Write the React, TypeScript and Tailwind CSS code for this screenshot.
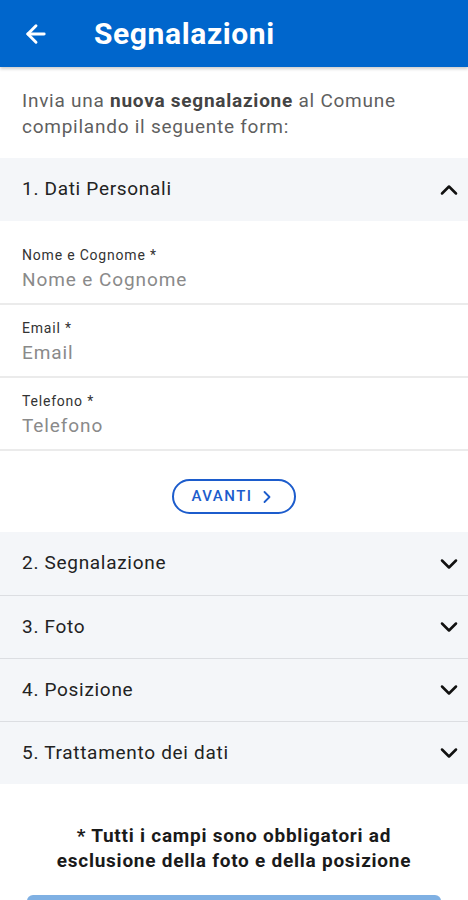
import { ArrowLeft, ChevronDown, ChevronUp, ChevronRight } from "lucide-react"

const fields = [
  { label: "Nome e Cognome *", placeholder: "Nome e Cognome" },
  { label: "Email *", placeholder: "Email" },
  { label: "Telefono *", placeholder: "Telefono" },
]

const sections = ["2. Segnalazione", "3. Foto", "4. Posizione", "5. Trattamento dei dati"]

export default function App() {
  return (
    <div className="h-[900px] overflow-hidden bg-white font-['Roboto',sans-serif]">
      {/* Header */}
      <header className="relative h-[67px] bg-[#0066cc] flex items-center shadow-[0_2px_3px_rgba(0,0,0,0.2)]">
        <ArrowLeft className="ml-[22px] h-7 w-7 text-white" strokeWidth={2.5} />
        <h1 className="ml-[44px] text-[30px] font-bold text-white tracking-[0.6px]">Segnalazioni</h1>
      </header>

      {/* Intro */}
      <p className="px-[22px] pt-[21px] pb-[18px] text-[19px] leading-[26px] tracking-[0.75px] text-[#5f5f5f]">
        Invia una <span className="font-bold text-[#444]">nuova segnalazione</span> al Comune compilando il seguente form:
      </p>

      {/* Section 1 */}
      <div className="h-[63px] bg-[#f4f6f9] flex items-center justify-between pl-[22px] pr-[5px]">
        <span className="text-[19px] tracking-[0.7px] text-[#222]">1. Dati Personali</span>
        <ChevronUp className="h-7 w-7 text-[#111]" strokeWidth={2.2} />
      </div>

      <div className="pt-[11px]">
        {fields.map((f) => (
          <div key={f.label} className="border-b-2 border-[#ebebeb] pl-[22px] pt-[15px] pb-[10px]">
            <div className="text-[14px] leading-[16px] tracking-[0.8px] text-[#333]">{f.label}</div>
            <div className="mt-[4px] text-[19px] leading-[26px] tracking-[0.9px] text-[#8a8a8a]">{f.placeholder}</div>
          </div>
        ))}
      </div>

      <div className="flex justify-center pt-[28px] pb-[18px]">
        <button className="h-[35px] w-[124px] rounded-full border-2 border-[#1c5ccc] flex items-center justify-center gap-[4px] text-[#1c5ccc] text-[15px] font-medium tracking-[1.5px]">
          AVANTI
          <ChevronRight className="h-5 w-5" strokeWidth={2.2} />
        </button>
      </div>

      {/* Collapsed sections */}
      <div className="bg-[#f4f6f9]">
        {sections.map((s, i) => (
          <div
            key={s}
            className={`h-[63px] flex items-center justify-between pl-[22px] pr-[5px] ${i > 0 ? "border-t border-[#dcdee2]" : ""}`}
          >
            <span className="text-[19px] tracking-[0.7px] text-[#222]">{s}</span>
            <ChevronDown className="h-7 w-7 text-[#111]" strokeWidth={2.2} />
          </div>
        ))}
      </div>

      <p className="pt-[39px] text-center text-[19px] leading-[25px] tracking-[0.75px] font-bold text-[#1a1a1a]">
        * Tutti i campi sono obbligatori ad
        <br />
        esclusione della foto e della posizione
      </p>

      <div className="mx-[27px] mt-[22px] h-[48px] rounded-[6px] bg-[#7fb0e3]" />
    </div>
  )
}
